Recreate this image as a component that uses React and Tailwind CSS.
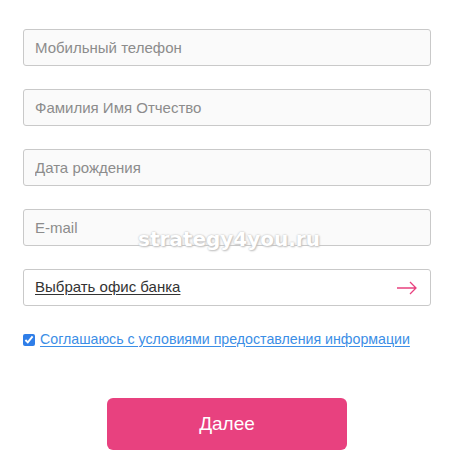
import { useState } from "react";

const fields = ["Мобильный телефон", "Фамилия Имя Отчество", "Дата рождения", "E-mail"];

export default function App() {
  const [agree, setAgree] = useState(true);

  return (
    <div className="relative h-[475px] w-[460px] bg-white font-['Liberation_Sans',Arial,sans-serif]">
      <div className="flex flex-col gap-[23px] px-[23px] pt-[29px]">
        {fields.map((label) => (
          <input
            key={label}
            placeholder={label}
            className="h-[37px] w-[408px] rounded-[3px] border border-[#c9c9c9] bg-[#fafafa] px-[11px] text-[15px] text-[#333] placeholder:text-[#8c8c8c] outline-none"
          />
        ))}

        <button className="flex h-[37px] w-[408px] items-center justify-between rounded-[3px] border border-[#c9c9c9] bg-white pl-[11px] pr-[12px] text-[15px] text-[#333]">
          <span className="underline underline-offset-2">Выбрать офис банка</span>
          <svg width="22" height="14" viewBox="0 0 22 14" fill="none" stroke="#e8417f" strokeWidth="1.3">
            <path d="M1 7h19M14 1l6 6-6 6" />
          </svg>
        </button>
      </div>

      <label className="mt-[23px] flex items-center gap-[5px] pl-[23px] text-[14.2px]">
        <input
          type="checkbox"
          checked={agree}
          onChange={(e) => setAgree(e.target.checked)}
          className="h-[12px] w-[12px] accent-[#2f7ee8]"
        />
        <a href="#" className="text-[#3b8ee6] underline underline-offset-2">
          Соглашаюсь с условиями предоставления информации
        </a>
      </label>

      <div className="mt-[48px] flex justify-center">
        <button className="ml-[-6px] h-[52px] w-[240px] rounded-[6px] bg-[#e8417f] text-[19px] text-white">
          Далее
        </button>
      </div>

      <div className="pointer-events-none absolute left-[138px] top-[224px] text-[20px] font-bold text-white [text-shadow:0_0_2px_#b5b5b5,1px_1px_2px_#c4c4c4] font-['DejaVu_Sans',sans-serif]">
        strategy4you.ru
      </div>
    </div>
  );
}
